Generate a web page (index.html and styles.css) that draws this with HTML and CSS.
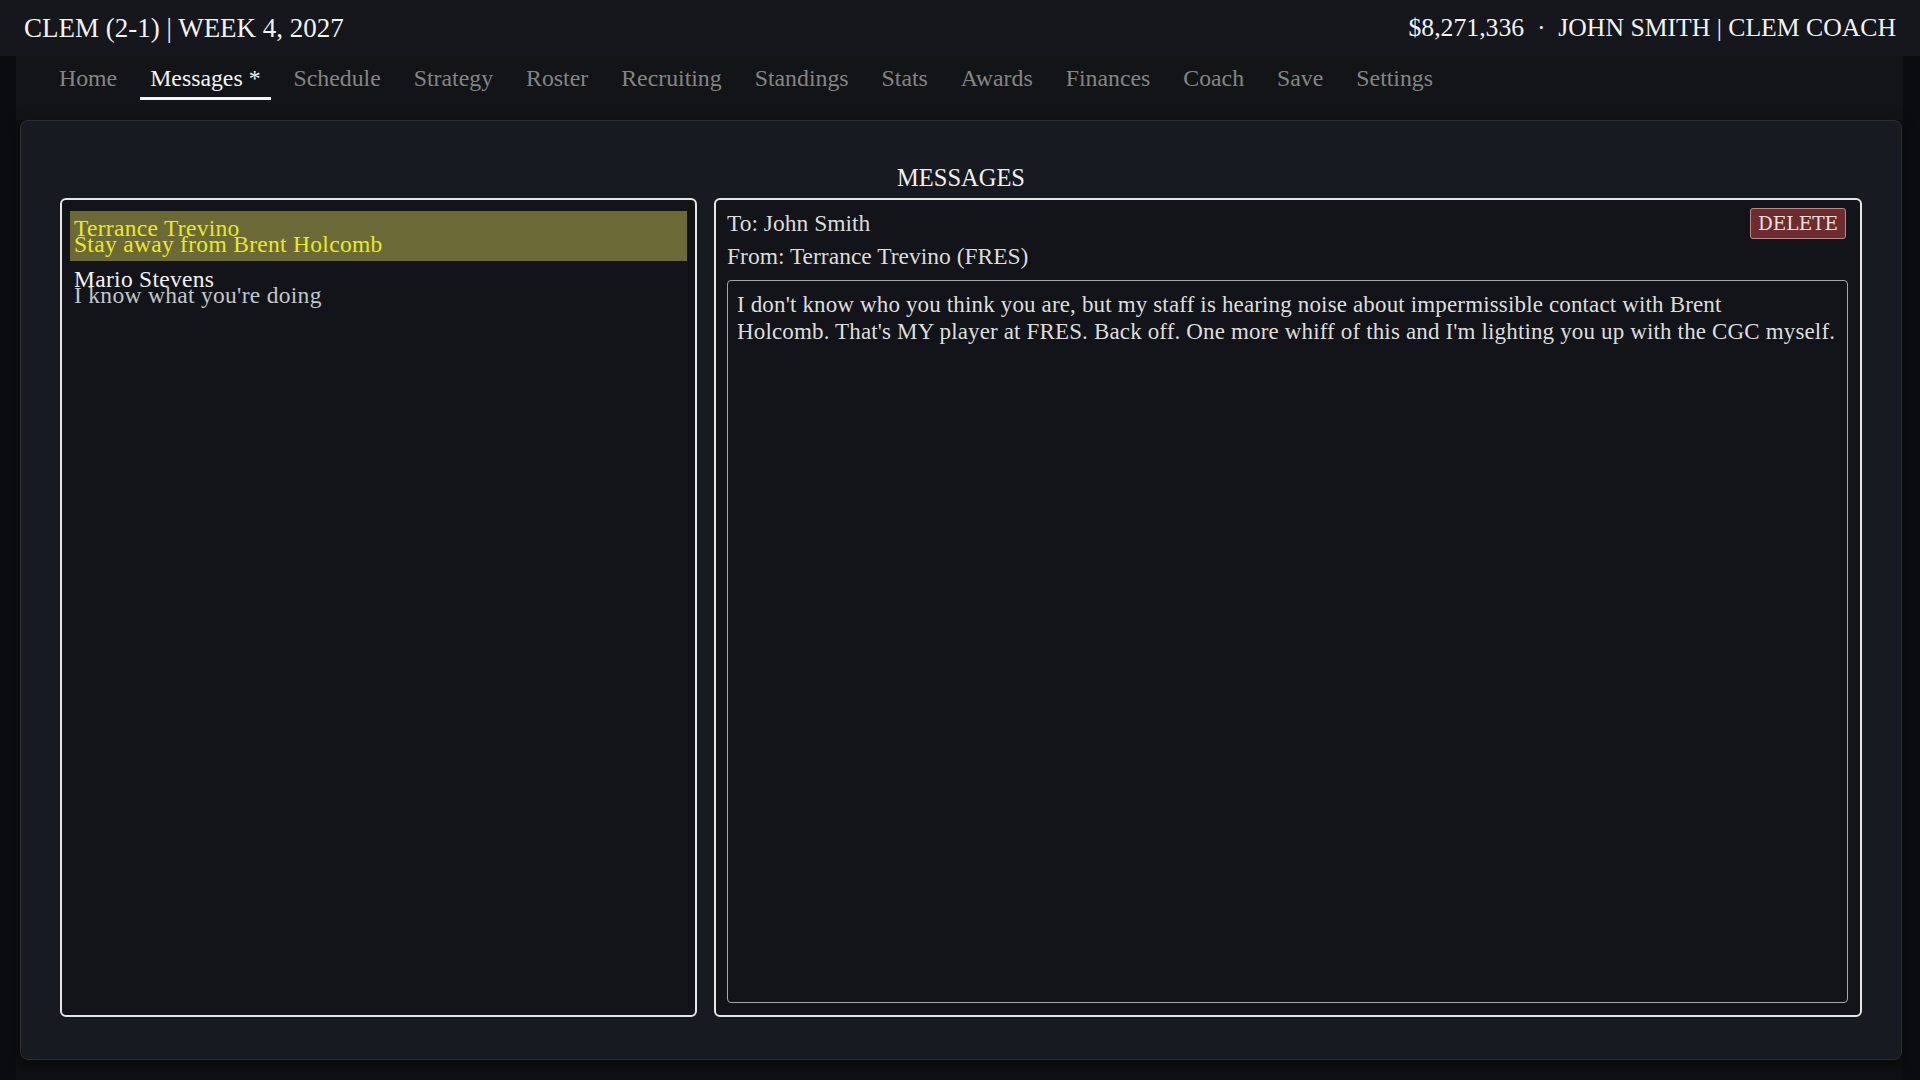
FILE: index.html
```html
<!DOCTYPE html>
<html>

<head>
	<meta charset="UTF-8">
	<title>Messages</title>
	<link rel="stylesheet" href="styles.css">
</head>

<body>
	<header class="topbar">
		<div class="team">CLEM (2-1) | WEEK 4, 2027</div>
		<div class="coach">$8,271,336 &nbsp;·&nbsp; JOHN SMITH | CLEM COACH</div>
	</header>

	<div class="app">
		<nav class="nav">
			<a class="nav-item">Home</a>
			<a class="nav-item active">Messages *</a>
			<a class="nav-item">Schedule</a>
			<a class="nav-item">Strategy</a>
			<a class="nav-item">Roster</a>
			<a class="nav-item">Recruiting</a>
			<a class="nav-item">Standings</a>
			<a class="nav-item">Stats</a>
			<a class="nav-item">Awards</a>
			<a class="nav-item">Finances</a>
			<a class="nav-item">Coach</a>
			<a class="nav-item">Save</a>
			<a class="nav-item">Settings</a>
		</nav>

		<main class="panel">
			<h2 class="panel-title">MESSAGES</h2>

			<div class="messages">
				<!-- 受信一覧 -->
				<div class="box inbox">
					<div class="msg-item selected">
						<div class="msg-from">Terrance Trevino</div>
						<div class="msg-subject">Stay away from Brent Holcomb</div>
					</div>
					<div class="msg-item">
						<div class="msg-from">Mario Stevens</div>
						<div class="msg-subject">I know what you're doing</div>
					</div>
				</div>

				<!-- 本文 -->
				<div class="box reader">
					<div class="reader-row">
						<span>To: John Smith</span>
						<button class="delete-btn">DELETE</button>
					</div>
					<div class="reader-row">From: Terrance Trevino (FRES)</div>
					<div class="reader-body">
						I don't know who you think you are, but my staff is hearing noise about impermissible contact with Brent<br>
						Holcomb. That's MY player at FRES. Back off. One more whiff of this and I'm lighting you up with the CGC myself.
					</div>
				</div>
			</div>
		</main>
	</div>
</body>

</html>
```

FILE: styles.css
```css
html,
body {
	height: 100%;
}

body {
	margin: 0;
	background: #0b0c0f;
	color: #ececec;
	font-family: "Liberation Serif", "Times New Roman", serif;
	display: flex;
	flex-direction: column;
}

.topbar {
	height: 56px;
	flex: none;
	display: flex;
	align-items: center;
	justify-content: space-between;
	padding: 0 24px;
	background: #15171c;
	font-size: 27px;
	color: #f3f3f3;
}

.coach {
	font-size: 25.7px;
}

.app {
	flex: 1;
	margin: 0 17px 0 16px;
	display: flex;
	flex-direction: column;
	background: linear-gradient(#131418 64px, #0f1013 64px);
}

.nav {
	display: flex;
	gap: 13px;
	padding: 8px 0 0 33px;
	height: 56px;
}

.nav-item {
	padding: 0 10px 5px;
	line-height: 28px;
	height: 28px;
	font-size: 23.8px;
	color: #858585;
	border-bottom: 3px solid transparent;
	cursor: pointer;
}

.nav-item.active {
	color: #f5f5f5;
	border-bottom-color: #f5f5f5;
}

.panel {
	flex: 1;
	margin: 0 1px 20px 4px;
	padding: 42px 39px 42px 39px;
	background: #171a20;
	border: 1px solid #2b2e33;
	border-radius: 8px;
	box-shadow: 0 4px 14px rgba(0, 0, 0, 0.5);
	display: flex;
	flex-direction: column;
}

.panel-title {
	margin: 0 0 5px;
	font-size: 24.5px;
	font-weight: normal;
	line-height: 30px;
	text-align: center;
	color: #f0f0f0;
}

.messages {
	flex: 1;
	display: grid;
	grid-template-columns: 637px 1fr;
	gap: 17px;
}

.box {
	border: 2px solid #e6e6e6;
	border-radius: 6px;
	background: #12141a;
}

.inbox {
	padding: 11px 8px;
	display: flex;
	flex-direction: column;
	gap: 1px;
}

.msg-item {
	padding: 9px 5px 9px 4px;
	font-size: 23.5px;
	letter-spacing: 0.3px;
	line-height: 16px;
	cursor: pointer;
}

.msg-from {
	color: #f2f2f2;
}

.msg-subject {
	color: #c3c6ca;
}

.msg-item.selected {
	background: #6b6a36;
}

.msg-item.selected .msg-from,
.msg-item.selected .msg-subject {
	color: #e8e82c;
}

.reader {
	padding: 7px 12px 12px 11px;
	display: flex;
	flex-direction: column;
	font-size: 23.5px;
	color: #dcdcdc;
}

.reader-row {
	display: flex;
	align-items: center;
	justify-content: space-between;
	line-height: 33px;
	height: 33px;
}

.delete-btn {
	margin-right: 2px;
	height: 31px;
	padding: 0 7px;
	background: #6d2c2d;
	border: 1px solid #b88a8a;
	border-radius: 3px;
	color: #f2e2e2;
	font-family: "DejaVu Serif", serif;
	font-size: 18.5px;
	cursor: pointer;
}

.reader-body {
	flex: 1;
	margin-top: 7px;
	padding: 10px 3px 10px 9px;
	border: 1px solid #a3a6ab;
	border-radius: 4px;
	font-size: 23px;
	letter-spacing: 0.15px;
	line-height: 27px;
	color: #dedede;
}
```
